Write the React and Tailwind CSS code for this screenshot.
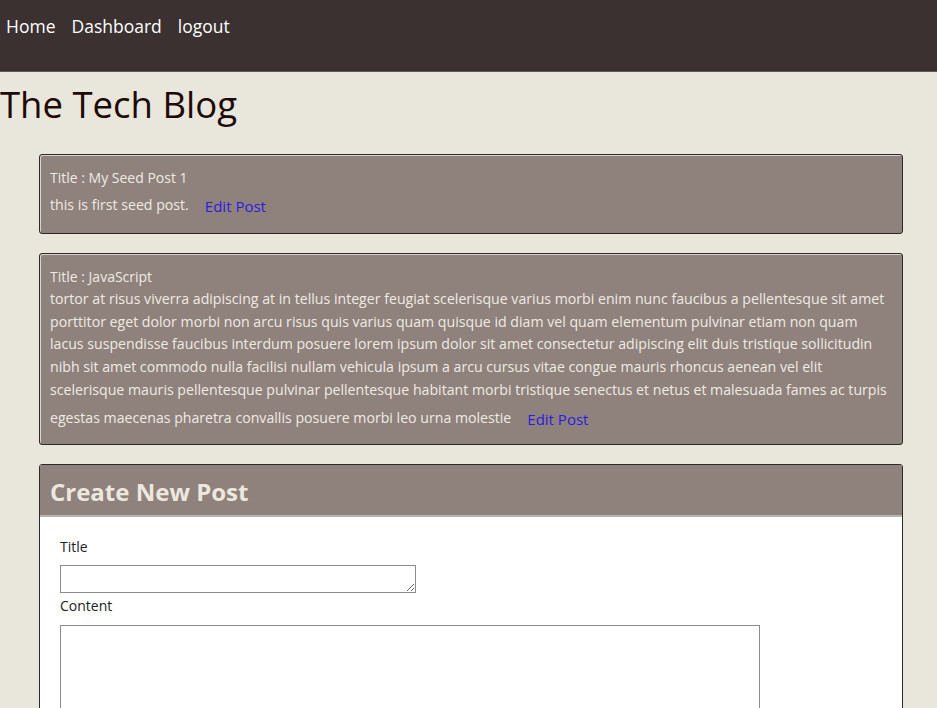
import React from "react";

const lorem =
  "tortor at risus viverra adipiscing at in tellus integer feugiat scelerisque varius morbi enim nunc faucibus a pellentesque sit amet porttitor eget dolor morbi non arcu risus quis varius quam quisque id diam vel quam elementum pulvinar etiam non quam lacus suspendisse faucibus interdum posuere lorem ipsum dolor sit amet consectetur adipiscing elit duis tristique sollicitudin nibh sit amet commodo nulla facilisi nullam vehicula ipsum a arcu cursus vitae congue mauris rhoncus aenean vel elit scelerisque mauris pellentesque pulvinar pellentesque habitant morbi tristique senectus et netus et malesuada fames ac turpis egestas maecenas pharetra convallis posuere morbi leo urna molestie";

function PostCard({ title, body, short }) {
  return (
    <div
      className={
        short
          ? "rounded-[3px] border border-[#2e2a29] bg-[#8f817c] px-[10px] pt-[12px] pb-[14px] text-[#efebe3] shadow-[inset_1px_1px_0_#d8d2cc]"
          : "rounded-[3px] border border-[#2e2a29] bg-[#8f817c] px-[10px] pt-[12px] pb-[12px] text-[#efebe3] shadow-[inset_1px_1px_0_#d8d2cc]"
      }
    >
      <div className="text-[14px] leading-[22px]">Title : {title}</div>
      <div className="text-[14.15px] leading-[22.7px]">
        {body}
        <a
          href="#"
          className="relative top-[2px] ml-[16px] inline-block text-[15px] leading-[30px] text-[#2b1ce0]"
        >
          Edit Post
        </a>
      </div>
    </div>
  );
}

export default function App() {
  return (
    <div className="min-h-screen bg-[#e9e6dc] font-['Open_Sans','Noto_Sans',sans-serif]">
      <nav className="h-[72px] border-b border-[#5e5857] bg-[#3a3130] px-[6px] pt-[12px]">
        <div className="flex gap-[16px] text-[17.5px] leading-[28px] text-white">
          <a href="#">Home</a>
          <a href="#">Dashboard</a>
          <a href="#">logout</a>
        </div>
      </nav>
      <h1 className="mt-[10px] text-[36.5px] leading-[44px] font-medium text-[#1e0b09]">
        The Tech Blog
      </h1>
      <main className="ml-[39px] mr-[34px] mt-[28px] flex flex-col gap-[19px]">
        <PostCard short title="My Seed Post 1" body="this is first seed post." />
        <PostCard title="JavaScript" body={lorem} />
        <div className="overflow-hidden rounded-[3px] border border-[#2e2a29] bg-white">
          <div className="border-b-2 border-[#b9b3b0] bg-[#8f817c] px-[10px] pt-[12px] pb-[8px] text-[24px] leading-[30px] font-bold text-[#ece8df]">
            Create New Post
          </div>
          <form className="px-[20px] pt-[20px] pb-[40px] text-[14px] text-[#222]">
            <label className="block leading-[20px]">Title</label>
            <textarea className="mt-[8px] block h-[28px] w-[356px] resize-y border border-[#8c8c8c]" />
            <label className="block leading-[22px] mt-[2px]">Content</label>
            <textarea className="mt-[8px] block h-[150px] w-[700px] border border-[#8c8c8c]" />
          </form>
        </div>
      </main>
    </div>
  );
}
